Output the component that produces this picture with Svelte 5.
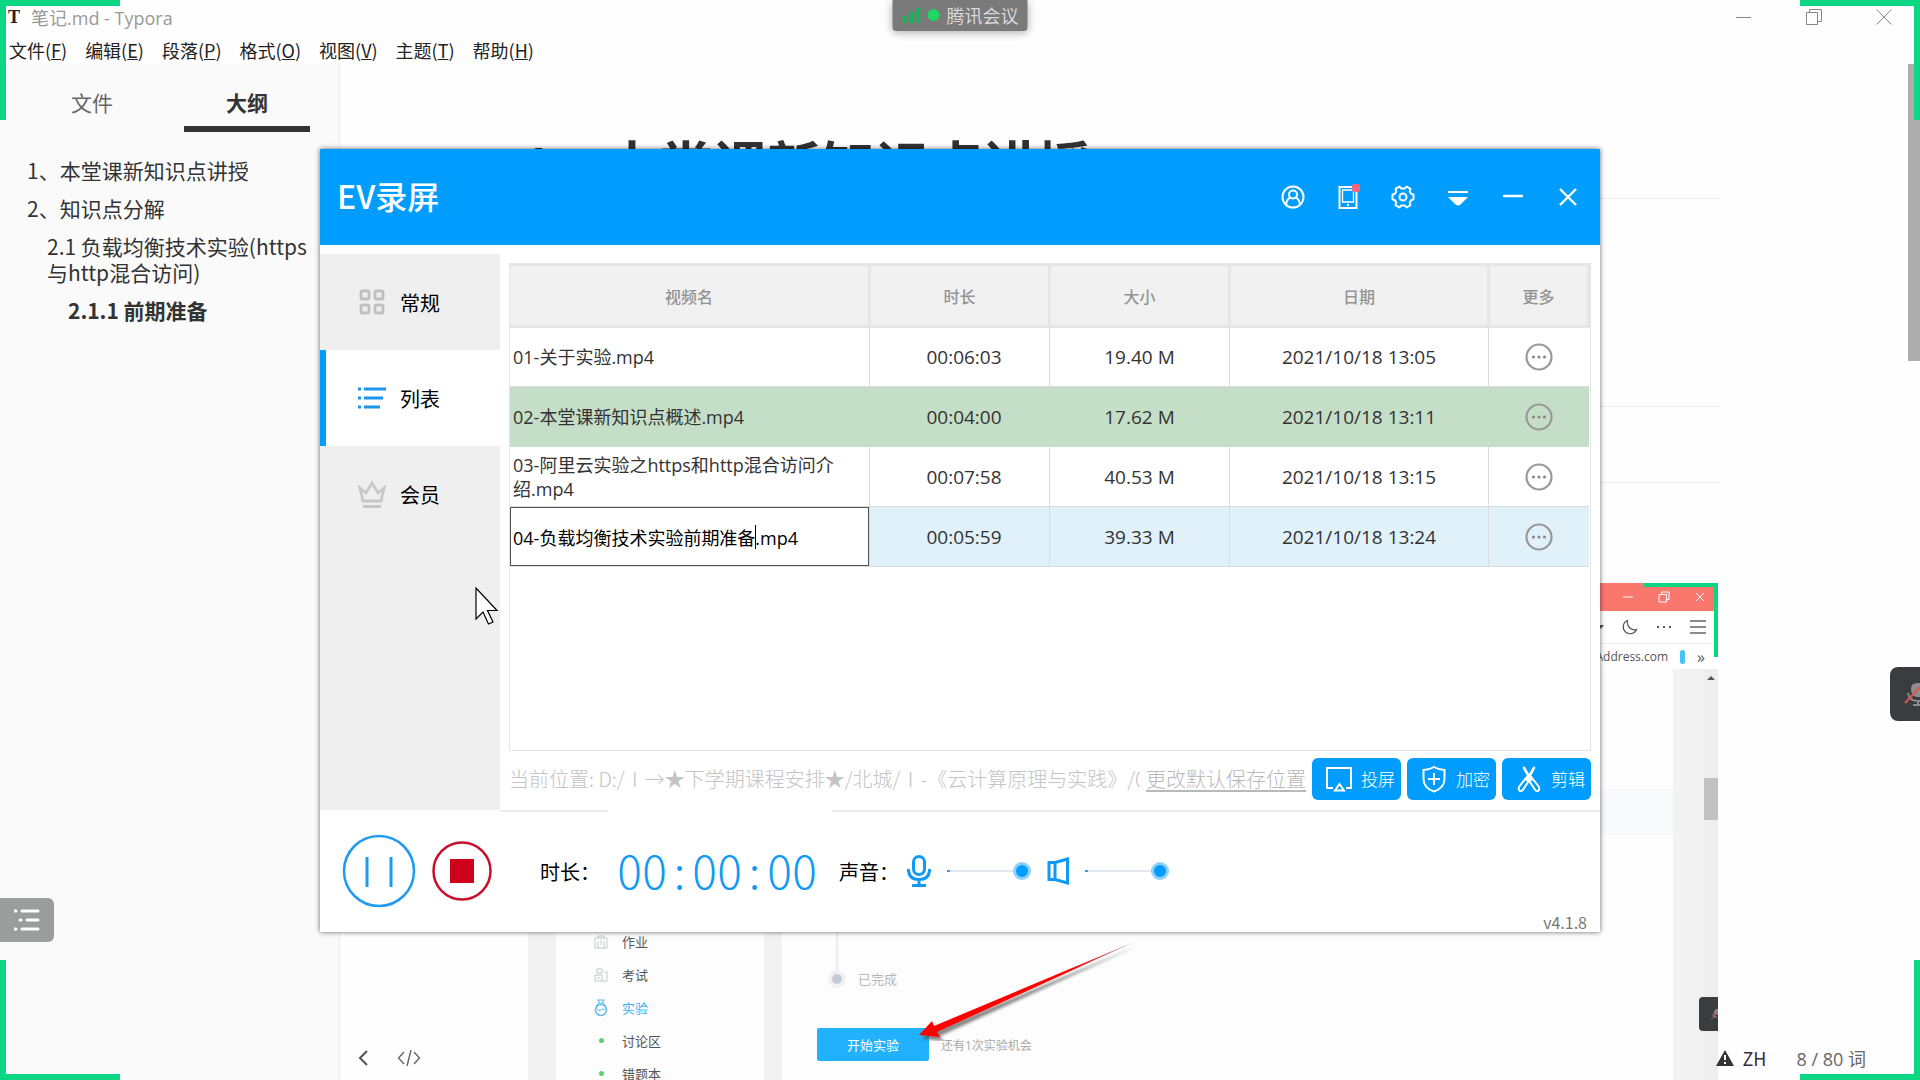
<script lang="ts">

    let menus = [
        { label: "文件", key: "F" },
        { label: "编辑", key: "E" },
        { label: "段落", key: "P" },
        { label: "格式", key: "O" },
        { label: "视图", key: "V" },
        { label: "主题", key: "T" },
        { label: "帮助", key: "H" }
    ];

    let outline = [
        { text: "1、本堂课新知识点讲授", level: 1, active: false },
        { text: "2、知识点分解", level: 1, active: false },
        { text: "2.1 负载均衡技术实验(https与http混合访问)", level: 2, active: false },
        { text: "2.1.1 前期准备", level: 3, active: true }
    ];

    let videos = [
        { name: "01-关于实验.mp4", length: "00:06:03", size: "19.40 M", date: "2021/10/18 13:05", state: "" },
        { name: "02-本堂课新知识点概述.mp4", length: "00:04:00", size: "17.62 M", date: "2021/10/18 13:11", state: "hover" },
        { name: "03-阿里云实验之https和http混合访问介绍.mp4", length: "00:07:58", size: "40.53 M", date: "2021/10/18 13:15", state: "" },
        { name: "04-负载均衡技术实验前期准备.mp4", length: "00:05:59", size: "39.33 M", date: "2021/10/18 13:24", state: "edit" }
    ];

    let clock = "00:00:00";
    let mic = 100;
    let speaker = 100;

    // part of the file name in front of the text cursor
    function stem(name: string) {
        return name.slice(0, name.lastIndexOf("."));
    }

</script>

<div class="desktop">
    <header class="titlebar">
        <span class="logo">T</span>
        <span class="title">笔记.md - Typora</span>
        <div class="winbtns">
            <button aria-label="最小化"><svg width="16" height="16" viewBox="0 0 16 16"><path d="M0 8.5h15" /></svg></button>
            <button aria-label="还原"><svg width="16" height="16" viewBox="0 0 16 16"><path d="M.5 3.5h11v12h-11zM3.500 3.500v-3h12v12h-4" /></svg></button>
            <button aria-label="关闭"><svg width="16" height="16" viewBox="0 0 16 16"><path d="M.5 .5l15 15M15.500 .5l-15 15" /></svg></button>
        </div>
    </header>
    <nav class="menubar">
        {#each menus as m}
        <button>{m.label}(<u>{m.key}</u>)</button>
        {/each}
    </nav>

    <div class="work">
        <aside class="outline">
            <div class="tabs">
                <button>文件</button>
                <button class="on">大纲</button>
            </div>
            <ul>
                {#each outline as item}
                <li class={"lv" + item.level} class:active={item.active}>{item.text}</li>
                {/each}
            </ul>
        </aside>

        <main class="doc">
            <h1>1、本堂课新知识点讲授</h1>
            <hr class="rule-a" />
            <hr class="rule-b" />
            <div class="shot">
                <div class="shot-title">
                    <svg width="12" height="12" viewBox="0 0 12 12"><path d="M1 6h10" /></svg>
                    <svg width="12" height="12" viewBox="0 0 12 12"><path d="M1 3.500h7.500v7.500h-7.500zM3.500 3.500v-2.500h7.500v7.500h-2.500" /></svg>
                    <svg width="12" height="12" viewBox="0 0 12 12"><path d="M2 2l8 8M10 2l-8 8" /></svg>
                </div>
                <div class="shot-tools">
                    <svg class="caret" width="6" height="4" viewBox="0 0 6 4"><path d="M0 0h6l-3 4z" fill="#555" /></svg>
                    <svg width="16" height="16" viewBox="0 0 16 16"><path d="M5.500 1.500C.5 3.500 0 10 3.500 13c3.500 3 9 2 11-2.500C10 12 4.500 8 5.500 1.500z" fill="none" stroke="#555" stroke-width="1.2" /></svg>
                    <svg width="16" height="4" viewBox="0 0 16 4"><path d="M1 1h2v2H1zM7 1h2v2H7zM13 1h2v2h-2z" fill="#555" /></svg>
                    <svg width="16" height="14" viewBox="0 0 16 14"><path d="M0 1h16M0 7h16M0 13h16" stroke="#666" stroke-width="1.400" /></svg>
                </div>
                <div class="shot-marks">
                    <span>Address.com</span>
                    <i></i>
                    <span class="more-marks">»</span>
                </div>
                <div class="shot-page">
                    <ul class="course">
                        <li>
                            <svg width="14" height="14" viewBox="0 0 14 14"><path d="M1 3h12v10H1zM4 3V1h6v2M4 6v7M10 6v7M7 5v5" /></svg>作业
                        </li>
                        <li>
                            <svg width="14" height="14" viewBox="0 0 14 14"><path d="M3 1h5v4H3zM1 13V7h7v6zM10 4h3v9H8M3 10h3" /></svg>考试
                        </li>
                        <li class="on">
                            <svg width="14" height="18" viewBox="0 0 14 18"><path d="M3 1h8M5 1v3l-3 3M9 1v3l3 3M4 4h6" /><circle cx="7" cy="11" r="5.500" stroke-width="1.500" /><path d="M3 10q2 3 4 1t4 0" /></svg>实验
                        </li>
                        <li><b></b>讨论区</li>
                        <li><b></b>错题本</li>
                    </ul>
                    <div class="lesson">
                        <div class="step"><i></i>已完成</div>
                        <div class="start">
                            <button>开始实验</button>
                            <span>还有1次实验机会</span>
                        </div>
                        <svg class="arrow" width="226" height="104" viewBox="0 0 226 104">
                            <defs>
                                <filter id="soft" x="-10%" y="-10%" width="120%" height="130%"><feGaussianBlur stdDeviation="1.500" /></filter>
                                <linearGradient id="red" x1="0" x2="1"><stop offset="0" stop-color="#f00" /><stop offset=".7" stop-color="#f00" /><stop offset="1" stop-color="#a88" /></linearGradient>
                            </defs>
                            <path d="M4 98L17 84l2 5L219 5 22 95l3 5z" transform="translate(3 4)" fill="#555" opacity=".7" filter="url(#soft)" />
                            <path d="M4 98L17 84l2 5L219 5 22 95l3 5z" fill="url(#red)" />
                        </svg>
                    </div>
                    <div class="gutter"></div>
                    <div class="shot-scroll"><span></span></div>
                </div>
                <div class="shot-mic"><svg width="12" height="20" viewBox="0 0 12 20"><path d="M6 8q0-6 6-6v9q-6 0-6-3M3 9q1 7 9 7" fill="#888" /><path d="M2 18L12 5" stroke="#d55" stroke-width="1.500" /></svg></div>
                <div class="shot-corner"></div>
            </div>
        </main>
        <div class="docscroll"></div>
    </div>

    <div class="docfoot">
        <button aria-label="折叠侧边栏"><svg width="12" height="18" viewBox="0 0 12 18"><path d="M10 2L3 9l7 7" fill="none" stroke="#555" stroke-width="2" /></svg></button>
        <button aria-label="源代码模式"><svg width="24" height="18" viewBox="0 0 24 18"><path d="M7 3L1.500 9 7 15M17 3l5.500 6L17 15M14 1l-4 16" fill="none" stroke="#666" stroke-width="1.400" /></svg></button>
        <span class="warn"><svg width="18" height="16" viewBox="0 0 18 16"><path d="M9 0l9 16H0z" fill="#333" /><path d="M9 5v5M9 12v2" stroke="#fff" stroke-width="2" /></svg></span>
        <span class="lang">ZH</span>
        <span class="words">8 / 80 词</span>
    </div>

    <!-- recorder window -->
    <section class="ev">
        <header class="ev-head">
            <h2>EV录屏</h2>
            <button aria-label="账号"><svg width="24" height="24" viewBox="0 0 24 24"><circle cx="12" cy="12" r="10.500" /><circle cx="12" cy="9.500" r="4" /><path d="M5 19.500q1-6 4.500-7M19 19.500q-1-6-4.500-7" /></svg></button>
            <button aria-label="手机"><svg width="24" height="24" viewBox="0 0 24 24"><path d="M3.500 2h17v21h-17z" /><path d="M6.500 5h11v12h-11z" stroke-width="1.300" /><circle cx="12" cy="20" r="1.200" fill="#fff" stroke="none" /><rect x="16" y="-1" width="8" height="8" rx="2" fill="#f5667f" stroke="none" /></svg></button>
            <button aria-label="设置"><svg width="24" height="24" viewBox="0 0 24 24"><path d="M8.500 1.500l1.500 2h4l1.500-2 4 2.300-.8 2.700 1.600 2.400 2.200.8v4.600l-2.200.8-1.600 2.400.8 2.700-4 2.300-1.500-2h-4l-1.500 2-4-2.300.8-2.700-1.600-2.400-2.200-.8V9.700l2.200-.8 1.600-2.400-.8-2.700z" stroke-linejoin="round" /><circle cx="12" cy="12" r="3.500" /></svg></button>
            <button aria-label="菜单"><svg width="24" height="24" viewBox="0 0 24 24"><path d="M2 7h20" /><path d="M2 12h20l-7 7q-3 3-6 0z" fill="#fff" stroke="none" /></svg></button>
            <button aria-label="最小化"><svg width="24" height="24" viewBox="0 0 24 24"><path d="M3 11h18" stroke-linecap="round" stroke-width="2.400" /></svg></button>
            <button aria-label="关闭"><svg width="24" height="24" viewBox="0 0 24 24"><path d="M4 4l16 16M20 4L4 20" stroke-width="2.400" /></svg></button>
        </header>

        <div class="ev-body">
            <nav class="ev-nav">
                <button>
                    <svg width="26" height="26" viewBox="0 0 26 26"><g fill="none" stroke="#c0c0c0" stroke-width="2.800"><rect x="2" y="2" width="8" height="8" rx="1.500" /><rect x="16" y="2" width="8" height="8" rx="1.500" /><rect x="2" y="16" width="8" height="8" rx="1.500" /><rect x="16" y="16" width="8" height="8" rx="1.500" /></g></svg>
                    常规
                </button>
                <button class="on">
                    <svg width="28" height="26" viewBox="0 0 28 26"><path d="M0 4h3M6 4h22M0 13h3M6 13h19M0 22h3M6 22h16" stroke="#1a96ea" stroke-width="3" /></svg>
                    列表
                </button>
                <button>
                    <svg width="28" height="28" viewBox="0 0 28 28"><path d="M2 8l3 13h18l3-13-6 5-6-10-6 10zM5 26.500h18" fill="none" stroke="#c8c8c8" stroke-width="2.800" /></svg>
                    会员
                </button>
            </nav>

            <div class="ev-main">
                <div class="ev-list">
                    <table>
                        <thead>
                            <tr>
                                <th class="c-name">视频名</th>
                                <th class="c-num">时长</th>
                                <th class="c-num">大小</th>
                                <th class="c-date">日期</th>
                                <th class="c-more">更多</th>
                            </tr>
                        </thead>
                        <tbody>
                            {#each videos as v}
                            <tr class={v.state}>
                                <td class="name">
                                    {#if v.state === "edit"}
                                    <div class="rename">
                                        <input type="text" aria-label="视频名" bind:value={v.name} />
                                        <span class="cursor" aria-hidden="true">{stem(v.name)}</span>
                                    </div>
                                    {:else}
                                    {v.name}
                                    {/if}
                                </td>
                                <td class="length">{v.length}</td>
                                <td>{v.size}</td>
                                <td>{v.date}</td>
                                <td>
                                    <button aria-label="更多"><svg width="28" height="28" viewBox="0 0 28 28"><circle cx="14" cy="14" r="12.500" fill="none" stroke="#999" stroke-width="2.200" /><circle cx="8.500" cy="14" r="1.600" fill="#888" /><circle cx="14" cy="14" r="1.600" fill="#888" /><circle cx="19.500" cy="14" r="1.600" fill="#888" /></svg></button>
                                </td>
                            </tr>
                            {/each}
                        </tbody>
                    </table>
                </div>
                <div class="ev-path">
                    <span>当前位置: D:/Ⅰ→★下学期课程安排★/北城/Ⅰ-《云计算原理与实践》/0</span>
                    <a href="#path">更改默认保存位置</a>
                    <button>
                        <svg width="28" height="28" viewBox="0 0 28 28"><path d="M8 23H2V3h24v20h-5" /><path d="M14.500 19l4.500 6.500h-9z" /></svg>
                        投屏
                    </button>
                    <button>
                        <svg width="28" height="28" viewBox="0 0 28 28"><path d="M14 2q5 3 10.500 3v9q0 9-10.500 12.500Q3.500 23 3.500 14V5Q9 5 14 2zM14 8v12M8 14h12" /></svg>
                        加密
                    </button>
                    <button>
                        <svg width="28" height="28" viewBox="0 0 28 28"><path d="M8.500 2l8 14M19.500 2l-8 14" stroke-width="2.600" /><path d="M12.500 11L4 22q-1 3 1 4 2 .5 3.500-2L15 14zM15.500 11L24 22q1 3-1 4-2 .5-3.500-2L13 14z" /></svg>
                        剪辑
                    </button>
                </div>
            </div>
        </div>

        <footer class="ev-foot">
            <button class="round" aria-label="暂停"><svg width="74" height="74" viewBox="0 0 74 74"><circle cx="37" cy="37" r="35" fill="none" stroke="#1e9bf0" stroke-width="2.500" /><path d="M25 23v30M49 23v30" stroke="#1e9bf0" stroke-width="3" /></svg></button>
            <button class="round" aria-label="停止"><svg width="60" height="60" viewBox="0 0 60 60"><circle cx="30" cy="30" r="28.500" fill="none" stroke="#c8102a" stroke-width="2.500" /><path d="M18 18h24v24H18z" fill="#d0021b" /></svg></button>
            <span class="lab">时长：</span>
            <output class="clock">{#each clock as ch}<span>{ch}</span>{/each}</output>
            <span class="lab">声音：</span>
            <svg class="ico-mic" width="24" height="34" viewBox="0 0 24 34"><g fill="none" stroke="#109af5" stroke-width="3"><rect x="6.500" y="2.500" width="11" height="18" rx="5.500" /><path d="M1.500 15v2q1 8.500 10.500 8.500T22.500 17v-2M12 25v6M5 31.500h14" /></g></svg>
            <input type="range" aria-label="麦克风音量" bind:value={mic} />
            <svg class="ico-spk" width="24" height="30" viewBox="0 0 24 30"><path d="M2 6.500h6v17H2zM8 6.500L20.500 3v24L8 23.500" fill="none" stroke="#109af5" stroke-width="3" /></svg>
            <input type="range" aria-label="扬声器音量" bind:value={speaker} />
            <span class="version">v4.1.8</span>
        </footer>
    </section>

    <svg class="pointer" width="24" height="38" viewBox="0 0 24 38"><path d="M1 1v31l7-7 5.500 12 4.500-2-5.500-11.500H22z" fill="#fff" stroke="#000" stroke-width="1.200" /></svg>

    <!-- meeting overlay -->
    <div class="meeting">
        <svg width="18" height="16" viewBox="0 0 18 16"><path d="M2 9v7M9 5v11M16 1v15" stroke="#10b95a" stroke-width="4" /></svg>
        <i></i>
        腾讯会议
    </div>
    <button class="side-list" aria-label="列表"><svg width="26" height="24" viewBox="0 0 26 24"><path d="M1 3h1M8 3h16M6 12h1M13 12h11M1 21h1M8 21h16" stroke="#fff" stroke-width="3" stroke-linecap="round" /></svg></button>
    <button class="side-mic" aria-label="静音"><svg width="16" height="26" viewBox="0 0 16 26"><path d="M7 8q0-6 6-6h3v14h-3q-6-1-6-8z" fill="#8b8d8f" /><path d="M4 12q1 8 10 8h2M14 20v4M9 24h7" fill="none" stroke="#8b8d8f" stroke-width="2" /><path d="M1 22L16 6" stroke="#e0524d" stroke-width="2" /></svg></button>
    <span class="corner tl"></span>
    <span class="corner tr"></span>
    <span class="corner bl"></span>
    <span class="corner br"></span>
</div>

<style>
    :global(body) {
        margin: 0;
        background: #fefefe;
    }

    .desktop {
        position: relative;
        display: flex;
        flex-direction: column;
        height: 100vh;
        overflow: hidden;
        font-family: "Open Sans", "Noto Sans CJK SC", sans-serif;
        font-size: 18px;
        color: #333;
    }

    button {
        font: inherit;
        color: inherit;
        border: 0;
        padding: 0;
        background: none;
    }

    svg {
        display: block;
        flex: none;
    }

    ul {
        list-style: none;
        margin: 0;
        padding: 0;
    }

    /* editor */
    .titlebar {
        display: flex;
        align-items: center;
        height: 34px;
        flex: none;
        padding: 0 28px 0 8px;
        color: #999;
    }

    .logo {
        width: 23px;
        font: bold 18px "Liberation Serif", serif;
        color: #222;
    }

    .winbtns {
        display: flex;
        gap: 54px;
        margin-left: auto;
    }

    .winbtns svg {
        fill: none;
        stroke: #888;
    }

    .menubar {
        display: flex;
        gap: 18px;
        height: 28px;
        flex: none;
        padding: 2px 9px 0;
        line-height: 26px;
        color: #222;
        font-family: "Noto Sans CJK SC", sans-serif;
    }

    .work {
        display: flex;
        flex: 1;
        min-height: 0;
    }

    .outline {
        width: 339px;
        flex: none;
        background: #fafafa;
        border-right: 1px solid #eee;
        font-size: 21px;
        font-family: "Noto Sans CJK SC", sans-serif;
    }

    .tabs {
        display: flex;
        padding: 14px 29px 0;
        gap: 29px;
    }

    .tabs button {
        width: 126px;
        height: 54px;
        border-bottom: 6px solid transparent;
        color: #666;
    }

    .tabs .on {
        border-color: #333;
        color: #333;
        font-weight: bold;
    }

    .outline ul {
        padding: 19px 30px 0 27px;
        line-height: 26px;
    }

    .outline li {
        padding: 6px 0;
    }

    .outline .lv2 {
        padding-left: 20px;
    }

    .outline .lv3 {
        padding-left: 41px;
    }

    .outline .active {
        font-weight: bold;
    }

    .doc {
        flex: 1;
        min-width: 0;
        padding: 0 188px 0 180px;
    }

    .doc h1 {
        margin: 70px 0 0;
        font-size: 54px;
        line-height: 64px;
        border-bottom: 1px solid #eee;
    }

    .doc hr {
        border: 0;
        border-top: 1px solid #eee;
        margin: 0;
    }

    .doc .rule-a {
        margin-top: 207px;
    }

    .doc .rule-b {
        margin-top: 75px;
    }

    .docscroll {
        width: 12px;
        height: 297px;
        background: #adadad;
    }

    .shot {
        position: relative;
        margin: 100px 2px 0 8px;
        height: 500px;
        background: #fff;
        font-size: 13px;
        color: #555;
    }

    .shot-title {
        display: flex;
        justify-content: flex-end;
        align-items: center;
        gap: 24px;
        height: 28px;
        padding-right: 12px;
        background: #f9776c;
    }

    .shot-title svg {
        fill: none;
        stroke: #fff;
    }

    .shot-tools {
        display: flex;
        justify-content: flex-end;
        align-items: center;
        gap: 18px;
        height: 32px;
        padding-right: 12px;
        border-bottom: 1px solid #eee;
    }

    .shot-marks {
        display: flex;
        justify-content: flex-end;
        align-items: center;
        gap: 12px;
        height: 25px;
        padding-right: 13px;
        font-size: 12px;
    }

    .shot-marks i {
        width: 5px;
        height: 14px;
        border-radius: 3px;
        background: #49c0f5;
    }

    .more-marks {
        font-size: 16px;
    }

    .shot-page {
        display: flex;
        height: 414px;
        background: #f2f2f3;
    }

    .course {
        width: 170px;
        flex: none;
        margin-left: 28px;
        padding: 256px 0 0 38px;
        background: #fdfdfd;
    }

    .course li {
        display: flex;
        align-items: center;
        gap: 14px;
        height: 33px;
    }

    .course svg {
        fill: none;
        stroke: #c4c8cc;
    }

    .course .on {
        color: #3fb0f0;
    }

    .course .on svg {
        stroke: #5fbcf2;
    }

    .course b {
        width: 5px;
        height: 5px;
        margin: 0 4px 0 5px;
        border-radius: 50%;
        background: #5bd06a;
    }

    .lesson {
        position: relative;
        flex: 1;
        margin-left: 18px;
        padding-left: 35px;
        background: linear-gradient(#fdfdfd 120px, #f7f9fd 120px, #f7f9fd 166px, #fdfdfd 166px);
    }

    .step {
        display: flex;
        align-items: flex-end;
        gap: 12px;
        height: 319px;
        line-height: 18px;
        margin-left: 11px;
        color: #b4b8bd;
    }

    .step i {
        position: relative;
        width: 10px;
        height: 10px;
        border: 4px solid #eef1f5;
        border-radius: 50%;
        background: #c5ccd6;
    }

    .step i::before {
        content: "";
        position: absolute;
        left: 4px;
        bottom: 14px;
        width: 2px;
        height: 200px;
        background: #e9edf2;
    }

    .start {
        display: flex;
        align-items: center;
        gap: 12px;
        margin-top: 40px;
        font-size: 12px;
        color: #aaa;
    }

    .start button {
        width: 112px;
        height: 33px;
        border-radius: 2px;
        background: #22b1fc;
        color: #fff;
        font-size: 13px;
    }

    .arrow {
        position: absolute;
        left: 133px;
        top: 268px;
    }

    .gutter {
        width: 31px;
    }

    .shot-scroll {
        width: 14px;
        background: #eee;
    }

    .shot-scroll::before {
        content: "";
        display: block;
        width: 0;
        margin: 7px auto 0;
        border: 4px solid transparent;
        border-top: 0;
        border-bottom: 4px solid #555;
    }

    .shot-scroll span {
        display: block;
        height: 42px;
        margin-top: 98px;
        background: #c1c1c1;
    }

    .shot-mic {
        position: absolute;
        right: 0;
        top: 414px;
        display: flex;
        justify-content: flex-end;
        align-items: center;
        width: 19px;
        height: 34px;
        border-radius: 4px 0 0 4px;
        background: #3a3d3f;
    }

    .shot-mic svg {
        width: 8px;
    }

    .shot-corner {
        position: absolute;
        top: 0;
        right: 0;
        width: 70px;
        height: 70px;
        border: solid #0bd681;
        border-width: 4px 4px 0 0;
    }

    .docfoot {
        position: absolute;
        left: 340px;
        right: 0;
        bottom: 8px;
        display: flex;
        align-items: center;
        height: 28px;
        padding: 0 54px 0 17px;
        color: #666;
    }

    .docfoot button {
        margin-right: 28px;
    }

    .warn {
        margin-left: auto;
    }

    .lang {
        margin: 0 30px 0 9px;
        color: #333;
        font-family: "Noto Sans CJK SC", sans-serif;
    }

    /* recorder */
    .ev {
        position: absolute;
        left: 320px;
        right: 320px;
        top: 149px;
        background: #fff;
        box-shadow: 0 0 5px rgba(0, 0, 0, .6);
    }

    .ev-head {
        display: flex;
        align-items: center;
        gap: 31px;
        height: 96px;
        padding: 0 20px 0 17px;
        background: #009dff;
        color: #fff;
    }

    .ev-head h2 {
        margin: 0 auto 0 0;
        font: 500 32px "Noto Sans CJK SC", sans-serif;
        line-height: 40px;
        padding-bottom: 4px;
    }

    .ev-head svg {
        fill: none;
        stroke: #fff;
        stroke-width: 2;
        overflow: visible;
    }

    .ev-body {
        display: flex;
        padding-top: 9px;
    }

    .ev-nav {
        width: 180px;
        flex: none;
        background: #efefef;
        font-size: 20px;
        color: #000;
    }

    .ev-nav button {
        display: flex;
        align-items: center;
        width: 100%;
        height: 96px;
        padding-left: 32px;
        border-left: 6px solid transparent;
        gap: 14px;
    }

    .ev-nav svg {
        width: 28px;
    }

    .ev-nav .on {
        background: #fff;
        border-color: #009dff;
    }

    .ev-main {
        flex: 1;
        min-width: 0;
        padding: 9px 9px 4px 9px;
    }

    .ev-list {
        height: 487px;
        border: 1px solid #e5e5e5;
        border-top: 0;
    }

    table {
        width: 100%;
        table-layout: fixed;
        border-collapse: collapse;
    }

    th {
        box-sizing: border-box;
        height: 62px;
        padding: 0;
        background: #f1f1f1;
        border: 3px solid #e6e6e6;
        border-width: 3px 3px 3px 0;
        font-size: 16px;
        font-weight: 500;
        line-height: 20px;
        color: #949494;
        font-family: "Noto Sans CJK SC", sans-serif;
    }

    .c-num {
        width: 180px;
    }

    .c-date {
        width: 259px;
    }

    .c-more {
        width: 100px;
    }

    td {
        box-sizing: border-box;
        height: 60px;
        padding: 0;
        border: 1px solid #dcdcdc;
        border-width: 0 0 1px 1px;
        text-align: center;
        font-size: 19px;
    }

    td:first-child {
        border-left: 0;
    }

    td.name {
        padding: 0 20px 0 3px;
        text-align: left;
        font-size: 18px;
        line-height: 24px;
    }

    td.length {
        padding-left: 9px;
    }

    td button {
        display: block;
        margin: 0 auto;
    }

    .hover td {
        background: #c5dec7;
        border-color: #c5dec7;
    }

    .edit td {
        background: #e1f1fa;
    }

    .edit td.name {
        padding: 0;
    }

    .rename {
        position: relative;
    }

    .rename input {
        display: block;
        box-sizing: border-box;
        width: 100%;
        height: 59px;
        padding: 0 2px;
        border: 1px solid #555;
        background: #fff;
        font: inherit;
        color: #000;
    }

    .cursor {
        position: absolute;
        left: 3px;
        top: 18px;
        border-right: 1px solid #000;
        color: transparent;
        white-space: nowrap;
        pointer-events: none;
    }

    .ev-path {
        display: flex;
        align-items: center;
        gap: 6px;
        height: 55px;
        font-size: 20px;
        color: #c4c4c4;
        font-family: "Noto Sans CJK SC", sans-serif;
        font-weight: 300;
    }

    .ev-path span {
        flex: 1;
        min-width: 0;
        overflow: hidden;
        white-space: nowrap;
    }

    .ev-path a {
        color: #b8b8b8;
        text-underline-offset: 3px;
    }

    .ev-path button {
        display: flex;
        align-items: center;
        justify-content: flex-end;
        gap: 8px;
        width: 89px;
        height: 42px;
        padding-right: 6px;
        border-radius: 6px;
        background: #009dff;
        color: #fff;
        font-size: 17px;
    }

    .ev-path svg {
        fill: none;
        stroke: #fff;
        stroke-width: 2;
    }

    .ev-foot {
        position: relative;
        display: flex;
        align-items: center;
        height: 122px;
        padding: 0 13px 0 22px;
        color: #000;
        font-size: 20px;
    }

    .ev-foot::before {
        content: "";
        position: absolute;
        left: 180px;
        right: 0;
        top: 0;
        height: 2px;
        background: linear-gradient(90deg, #ececec 108px, #fff 108px, #fff 332px, #ececec 332px);
    }

    .round {
        margin-right: 16px;
    }

    .lab {
        width: 51px;
        flex: none;
        white-space: nowrap;
    }

    .round + .lab {
        margin-left: 32px;
    }

    .clock {
        display: flex;
        margin: 0 22px 0 26px;
        padding-bottom: 4px;
        color: #109af5;
        font: 300 46px "Noto Sans CJK SC", sans-serif;
        line-height: 60px;
    }

    .clock span {
        width: 25px;
        text-align: center;
    }

    .ico-mic {
        margin: 0 16px 0 17px;
    }

    .ico-spk {
        margin: 0 14px 0 16px;
    }

    input[type=range] {
        appearance: none;
        width: 84px;
        height: 18px;
        margin: 0;
        background: linear-gradient(90deg, #3a9be0 3px, #e3e6ea 3px) center / 100% 2px no-repeat;
    }

    input[type=range]::-webkit-slider-thumb {
        appearance: none;
        width: 18px;
        height: 18px;
        border: 3px solid #8fd0fa;
        border-radius: 50%;
        background: #009dff;
    }

    .version {
        align-self: flex-end;
        margin-left: auto;
        font-size: 16px;
        line-height: 20px;
        color: #777;
        font-family: "Noto Sans CJK SC", sans-serif;
    }

    .pointer {
        position: absolute;
        left: 475px;
        top: 587px;
    }

    /* meeting */
    .meeting {
        position: absolute;
        left: 50%;
        top: 0;
        transform: translateX(-50%);
        display: flex;
        align-items: center;
        gap: 7px;
        height: 29px;
        padding: 0 9px 2px 10px;
        border-radius: 0 0 4px 4px;
        background: #7a7a7a;
        box-shadow: 0 2px 8px rgba(0, 0, 0, .3);
        color: #d8d8d8;
        white-space: nowrap;
    }

    .meeting i {
        width: 12px;
        height: 12px;
        border-radius: 50%;
        background: #1ed760;
    }

    .side-list {
        position: absolute;
        left: 0;
        bottom: 138px;
        width: 54px;
        height: 44px;
        padding-left: 14px;
        border-radius: 0 6px 6px 0;
        background: #9b9d9c;
    }

    .side-mic {
        position: absolute;
        right: 0;
        top: 667px;
        width: 30px;
        height: 54px;
        padding-left: 14px;
        border-radius: 8px 0 0 8px;
        background: #3a3d3f;
    }

    .corner {
        position: absolute;
        width: 114px;
        height: 114px;
        border: 0 solid #0bd681;
        pointer-events: none;
    }

    .tl {
        left: 0;
        top: 0;
        border-width: 6px 0 0 6px;
    }

    .tr {
        right: 0;
        top: 0;
        border-width: 6px 6px 0 0;
    }

    .bl {
        left: 0;
        bottom: 0;
        border-width: 0 0 6px 6px;
    }

    .br {
        right: 0;
        bottom: 0;
        border-width: 0 6px 6px 0;
    }
</style>
